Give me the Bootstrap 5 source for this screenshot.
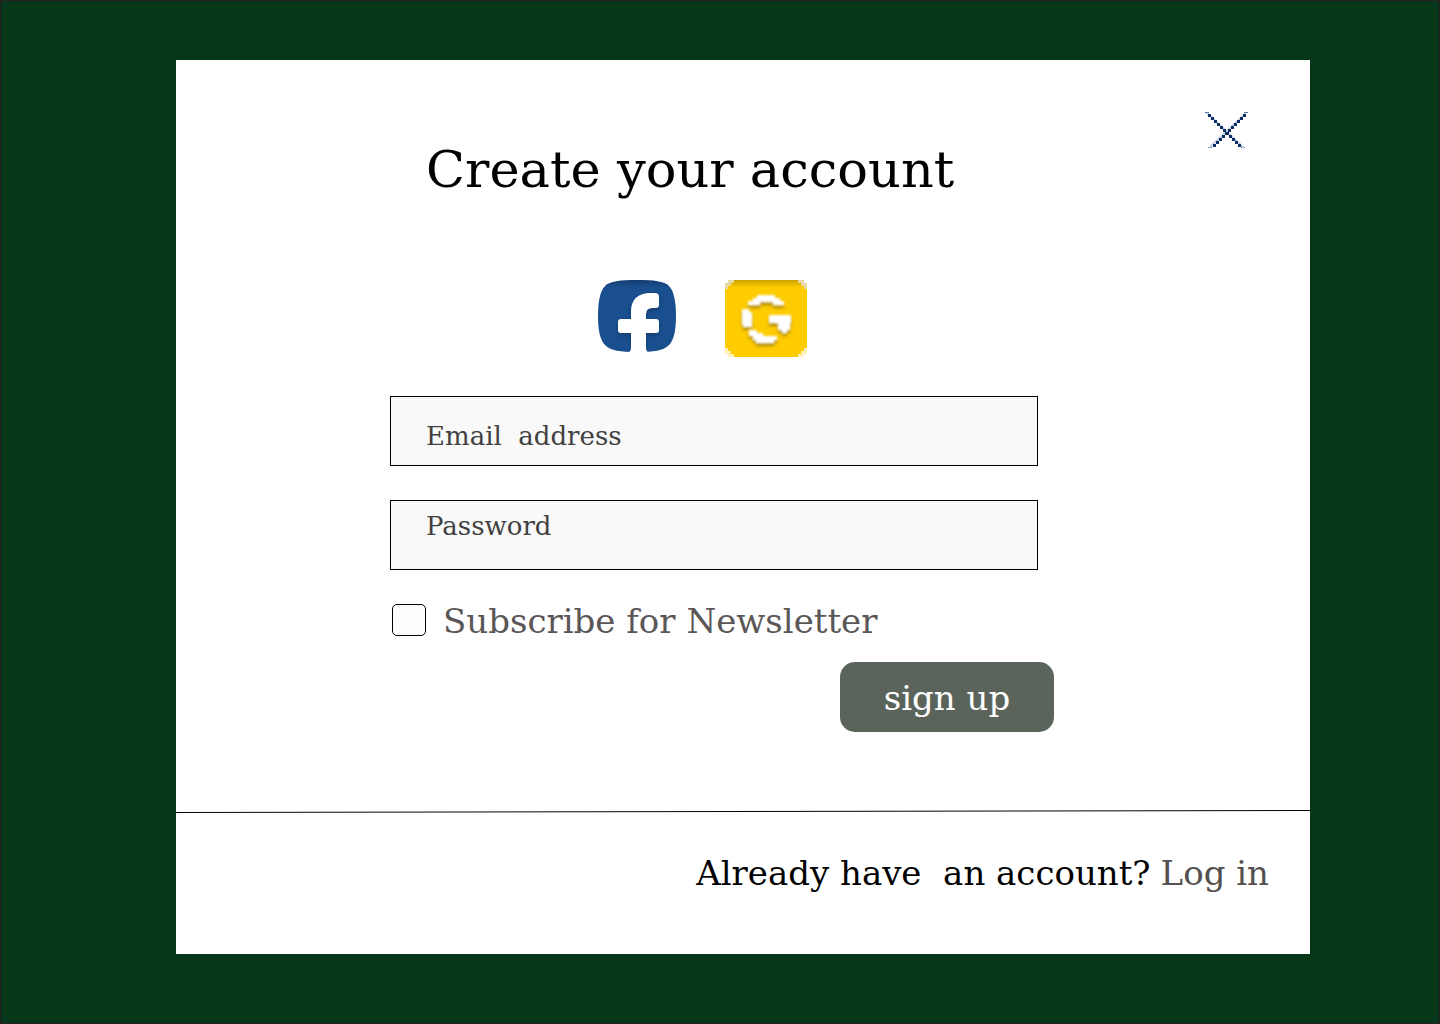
<!DOCTYPE html>
<html lang="en">
<head>
<meta charset="utf-8">
<meta name="viewport" content="width=device-width, initial-scale=1">
<title>Create your account</title>
<link rel="stylesheet" href="https://cdn.jsdelivr.net/npm/bootstrap@5.3.0/dist/css/bootstrap.min.css">
<style>
body { background: #063719; color: #000; font-family: "DejaVu Serif", serif; font-size: 34px; line-height: 48px; }
.page-frame { border: 1px solid #231f20; padding: 59px 129px 69px 175px; }
.panel-head { padding: 52px 62px 0 250px; }
.panel-title { font-size: 51px; line-height: 72px; padding-top: 22px; }
.icon-btn { background: none; border: 0; padding: 0; line-height: 0; }
.signup-form { max-width: 878px; padding: 74px 0 78px 214px; }
.social-row { gap: 49px; padding-left: 208px; margin-bottom: 39px; }
.field-box { height: 70px; border: 1px solid #000; border-radius: 0; background: #f9f9f9; color: #414141; font-size: 26px; line-height: 36px; padding: 16px 36px; }
.field-box:focus { background: #f9f9f9; box-shadow: none; border-color: #063719; }
.field-label { left: 36px; color: #414141; font-size: 26px; line-height: 36px; pointer-events: none; }
.field-label-email { top: 22px; }
.field-label-password { top: 8px; }
.field-box:not(:placeholder-shown) + .field-label { visibility: hidden; }
.field-email { margin-bottom: 34px; }
.field-password { margin-bottom: 26px; }
.news-row { gap: 17px; padding-left: 2px; color: #5b5757; margin-bottom: 18px; }
.news-row label { padding-top: 2px; line-height: 46px; }
.news-box.form-check-input { width: 34px; height: 32px; margin: 0; border: 1px solid #000; border-radius: 5px; background-color: #fdfdfd; }
.btn-signup, .btn-signup:hover { background: #5a645b; color: #fff; border: 0; border-radius: 15px; width: 214px; height: 70px; font-size: 34px; line-height: 48px; padding: 12px 0 10px; }
.divider-line { height: 3px; }
.panel-foot { padding: 36px 41px 57px; gap: 10px; }
.login-link { color: #555050; }
</style>
<script src="https://cdn.jsdelivr.net/npm/bootstrap@5.3.0/dist/js/bootstrap.bundle.min.js" defer></script>
</head>
<body>
<div class="page-frame min-vh-100 d-flex">
<main class="bg-white flex-grow-1 d-flex flex-column">
  <header class="panel-head d-flex justify-content-between align-items-start">
    <h1 class="panel-title fw-normal mb-0">Create your account</h1>
    <button class="icon-btn" type="button" aria-label="Close">
      <svg width="43" height="37" viewBox="0 0 43 37" fill="none">
        <path d="M0 .5h4M39 .5h4M3 35.5h4M36 35.5h4" stroke="#4a699a"/>
        <path d="M2 1L39 36M41 1L4 36" stroke="#c3cedd" stroke-width="2"/>
        <path fill="#0e2f66" d="M3 2h3v3h-3zm3 3h3v3h-3zm3 3h3v3h-3zm3 3h3v3h-3zm3 3h3v3h-3zm3 3h3v3h-3zm3 3h3v3h-3zm3 3h3v3h-3zm3 3h3v3h-3zm3 3h3v3h-3zm3 3h3v3h-3z"/>
        <path fill="#0e2f66" d="M38 2h3v3h-3zm-3 3h3v3h-3zm-3 3h3v3h-3zm-3 3h3v3h-3zm-3 3h3v3h-3zm-3 3h3v3h-3zm-3 3h3v3h-3zm-3 3h3v3h-3zm-3 3h3v3h-3zm-3 3h3v3h-3zm-3 3h3v3h-3z"/>
      </svg>
    </button>
  </header>

  <form class="signup-form">
    <div class="social-row d-flex align-items-start">
      <button class="icon-btn" type="button" aria-label="Sign up with Facebook">
        <svg width="78" height="72" viewBox="0 0 78 72">
          <defs>
            <linearGradient id="fbShade" x1="0" y1="0" x2="0" y2="1">
              <stop offset="0" stop-color="#153c70"/><stop offset=".1" stop-color="#1a4f8f"/><stop offset="1" stop-color="#1a4f8f"/>
            </linearGradient>
            <filter id="fbShadow" x="-20%" y="-20%" width="140%" height="140%"><feDropShadow dx="0" dy="2" stdDeviation="2" flood-color="#0b2a55" flood-opacity=".6"/></filter>
            <clipPath id="fbClip"><path d="M39 0C56 0 66 1 71 6C76 11 78 22 78 36C78 50 76 60 71 65C65 71 56 72 39 72C22 72 13 71 7 65C2 60 0 50 0 36C0 22 2 11 7 6C12 1 22 0 39 0Z"/></clipPath>
          </defs>
          <g clip-path="url(#fbClip)">
            <path fill="url(#fbShade)" d="M0 0h78v72H0z"/>
            <path fill="#fff" filter="url(#fbShadow)" d="M33 68V53H23Q20 53 20 50V42Q20 39 23 39H33V32Q33 13 53 13H57Q61 13 61 17V25Q61 28 57 28H54Q48 28 48 34V39H58Q61 39 61 42V50Q61 53 58 53H48V68Q48 72 51 74H30Q33 72 33 68Z"/>
          </g>
          <path fill="#fff" d="M33 60h15v9q0 3 3 3H30q3 0 3-3z"/>
        </svg>
      </button>
      <button class="icon-btn" type="button" aria-label="Sign up with Google">
        <svg width="82" height="77" viewBox="0 0 82 77">
          <defs>
            <filter id="gSoft" x="-20%" y="-20%" width="140%" height="140%"><feGaussianBlur stdDeviation=".8" result="soft"/><feDropShadow in="soft" dx="0" dy="3" stdDeviation="1.5" flood-color="#8a6d00" flood-opacity=".7"/></filter>
            <linearGradient id="gShade" x1="0" y1="0" x2="0" y2="1">
              <stop offset="0" stop-color="#cda300"/><stop offset=".1" stop-color="#fc0"/><stop offset="1" stop-color="#fc0"/>
            </linearGradient>
          </defs>
          <g shape-rendering="crispEdges">
            <path fill="#e6d9a6" d="M3 0h76v3h3v6H0V3h3z"/>
            <path fill="#fff1b5" d="M0 68h82v6h-3v3H3v-3H0z"/>
            <path fill="url(#gShade)" d="M9 0h64v3h3v3h3v3h3v59h-3v3h-3v3h-3v3H9v-3H6v-3H3v-3H0V9h3V6h3V3h3z"/>
          </g>
          <path fill="#fff" filter="url(#gSoft)" d="M32 15h18v3h5v3h4v4H48v-3H35v3H23v-4h5v-3h4zM17 29h7v3h3v15h-9v-3h-1zM44 35h22v8h-1v7h-3v3h-5v-3h-4v-7h-9zM24 50h8v3h6v3h14v4h-3v3H31v-3h-3v-4h-4z"/>
        </svg>
      </button>
    </div>

    <div class="me-3">
      <div class="position-relative">
        <input class="form-control field-box field-email" id="email" type="email" placeholder=" ">
        <label class="field-label field-label-email position-absolute" for="email">Email&nbsp; address</label>
      </div>
      <div class="position-relative">
        <input class="form-control field-box field-password" id="password" type="password" placeholder=" ">
        <label class="field-label field-label-password position-absolute" for="password">Password</label>
      </div>
    </div>

    <div class="news-row d-flex align-items-center">
      <input class="form-check-input news-box flex-shrink-0" id="news" type="checkbox">
      <label for="news">Subscribe for Newsletter</label>
    </div>

    <div class="d-flex justify-content-end">
      <button class="btn btn-signup" type="submit">sign up</button>
    </div>
  </form>

  <svg class="divider-line w-100 d-block" viewBox="0 0 1134 3" preserveAspectRatio="none" aria-hidden="true"><path d="M0 2.5L1134 .5" stroke="#000"/></svg>

  <footer class="panel-foot d-flex justify-content-end">
    <span>Already have&nbsp; an account?</span>
    <a class="login-link text-decoration-none" href="#">Log in</a>
  </footer>
</main>
</div>
</body>
</html>
